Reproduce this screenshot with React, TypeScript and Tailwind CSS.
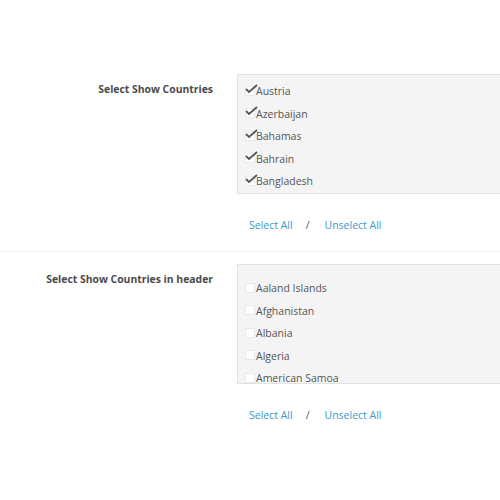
import React from 'react';

type Item = { name: string; checked: boolean };

const shown: Item[] = [
  { name: 'Austria', checked: true },
  { name: 'Azerbaijan', checked: true },
  { name: 'Bahamas', checked: true },
  { name: 'Bahrain', checked: true },
  { name: 'Bangladesh', checked: true },
];

const header: Item[] = [
  { name: 'Aaland Islands', checked: false },
  { name: 'Afghanistan', checked: false },
  { name: 'Albania', checked: false },
  { name: 'Algeria', checked: false },
  { name: 'American Samoa', checked: false },
];

const Check: React.FC<{ checked: boolean }> = ({ checked }) => (
  <span className="relative inline-block w-[10px] h-[10px] bg-white border border-[#e8e8e8] mb-[3px] shrink-0">
    {checked && (
      <svg className="absolute -left-[1px] -top-[3px]" width="13" height="10" viewBox="0 0 13 10">
        <path d="M1 5 L4 8 L12 1" fill="none" stroke="#555" strokeWidth="1.8" />
      </svg>
    )}
  </span>
);

const Section: React.FC<{ label: string; items: Item[]; padTop: string; border?: boolean }> = ({ label, items, padTop, border }) => (
  <div className={border ? 'border-b border-[#f0f0f0]' : ''}>
    <div className="flex">
      <div className="w-[237px] shrink-0 pr-[24px] pt-[7px] text-right text-[10.4px] font-bold text-[#4a4a4a] leading-[16px]">
        {label}
      </div>
      <div className="flex-1 min-w-0">
        <div className={`h-[120px] overflow-hidden bg-[#f4f4f4] border border-r-0 border-[#e2e2e2] pl-[7px] ${padTop}`}>
          {items.map((it) => (
            <div key={it.name} className="flex items-center h-[22.5px] text-[10.5px] text-[#555]">
              <Check checked={it.checked} />
              <span className="ml-[1px]">{it.name}</span>
            </div>
          ))}
        </div>
        <div className="mt-[22px] pl-[12px] pb-[17px] flex items-center leading-[18px] text-[10.5px]">
          <a className="text-[#3d96cf] cursor-pointer">Select All</a>
          <span className="text-[#555] ml-[13px] mr-[15px]">/</span>
          <a className="text-[#3d96cf] cursor-pointer">Unselect All</a>
        </div>
      </div>
    </div>
  </div>
);

export default function App() {
  return (
    <div className="w-[500px] h-[500px] bg-white overflow-hidden" style={{ fontFamily: '"Open Sans", sans-serif' }}>
      <div className="pt-[74px]">
        <Section label="Select Show Countries" items={shown} padTop="pt-[6px]" border />
        <div className="pt-[12px]">
          <Section label="Select Show Countries in header" items={header} padTop="pt-[13px]" />
        </div>
      </div>
    </div>
  );
}
